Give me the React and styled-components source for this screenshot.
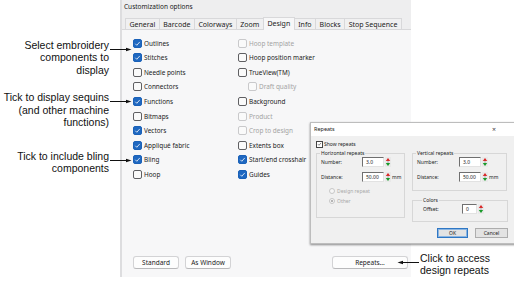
import styled, { createGlobalStyle } from "styled-components";

const GlobalStyle = createGlobalStyle`
  html, body {
    margin: 0;
    padding: 0;
    background: #fff;
  }
  body {
    width: 514px;
    height: 288px;
    overflow: hidden;
  }
`;

const leftItems = [
  { label: "Outlines", checked: true },
  { label: "Stitches", checked: true },
  { label: "Needle points" },
  { label: "Connectors" },
  { label: "Functions", checked: true },
  { label: "Bitmaps" },
  { label: "Vectors", checked: true },
  { label: "Appliqué fabric", checked: true },
  { label: "Bling", checked: true },
  { label: "Hoop" },
];

const rightItems = [
  { label: "Hoop template", disabled: true },
  { label: "Hoop position marker" },
  { label: "TrueView(TM)" },
  { label: "Draft quality", disabled: true, indent: true },
  { label: "Background" },
  { label: "Product", disabled: true },
  { label: "Crop to design", disabled: true },
  { label: "Extents box" },
  { label: "Start/end crosshair", checked: true },
  { label: "Guides", checked: true },
];

const tabs = ["General", "Barcode", "Colorways", "Zoom", "Design", "Info", "Blocks", "Stop Sequence"];

const Page = styled.div`
  position: relative;
  display: flex;
  width: 514px;
  height: 288px;
  font-family: "Noto Sans", sans-serif;
`;

const CalloutColumn = styled.div`
  position: relative;
  z-index: 2;
  flex: none;
  width: 120px;
  display: flex;
  flex-direction: column;
  align-items: flex-end;
  padding-top: 38.5px;
  box-sizing: border-box;
`;

const Callout = styled.div`
  display: flex;
  align-items: flex-start;
  margin-top: ${(p) => p.$gap || 0}px;
  margin-right: -12px;
`;

const CalloutText = styled.div`
  font-family: "Liberation Sans", Arial, sans-serif;
  font-size: 10.5px;
  line-height: 12.5px;
  color: #111;
  text-align: ${(p) => (p.$left ? "left" : "right")};
  white-space: nowrap;
`;

const LeaderSvg = styled.svg`
  flex: none;
  display: block;
`;

const RightCallout = styled.div`
  position: absolute;
  left: 397px;
  top: 251.5px;
  display: flex;
  align-items: flex-start;
`;

const Leader = ({ left }) => (
  <LeaderSvg width="23" height="13" viewBox="0 0 23 13">
    {left ? (
      <>
        <line x1="4" y1="10.5" x2="22" y2="10.5" stroke="#111" strokeWidth="1" />
        <polygon points="0.5,10.5 6,8.8 6,12.2" fill="#111" />
      </>
    ) : (
      <>
        <line x1="1" y1="10.5" x2="18" y2="10.5" stroke="#111" strokeWidth="1" />
        <polygon points="22.5,10.5 17,8.8 17,12.2" fill="#111" />
      </>
    )}
  </LeaderSvg>
);

const Dialog = styled.div`
  flex: none;
  width: 291px;
  height: 277px;
  display: flex;
  flex-direction: column;
  background: #eeeeef;
  border-left: 2px solid #dddddf;
  box-sizing: border-box;
`;

const DialogTitle = styled.div`
  height: 16px;
  padding-left: 2px;
  font-size: 6.5px;
  line-height: 14px;
  color: #1b1b1b;
`;

const TabStrip = styled.div`
  display: flex;
  align-items: flex-end;
  height: 13px;
  padding-left: 4px;
`;

const Tab = styled.div`
  position: relative;
  height: ${(p) => (p.$active ? 13 : 11)}px;
  margin-left: -1px;
  margin-bottom: ${(p) => (p.$active ? -1 : 0)}px;
  padding: 0 3.5px;
  border: 1px solid #d8d8da;
  border-bottom: none;
  background: ${(p) => (p.$active ? "#f7f7f8" : "#f0f0f1")};
  z-index: ${(p) => (p.$active ? 1 : 0)};
  font-size: 7px;
  line-height: ${(p) => (p.$active ? 12 : 11)}px;
  color: #1b1b1b;
  box-sizing: border-box;
  white-space: nowrap;
`;

const Panel = styled.div`
  flex: 1;
  display: flex;
  flex-direction: column;
  background: #f7f7f8;
  border-top: 1px solid #d8d8da;
  padding: 6px 3px 8px 11px;
`;

const OptionGrid = styled.div`
  display: grid;
  grid-template-columns: 105px 1fr;
  grid-auto-flow: column;
  grid-template-rows: repeat(10, 14.56px);
`;

const Option = styled.label`
  display: flex;
  align-items: center;
  gap: 2px;
  padding-left: ${(p) => (p.$indent ? 10 : 0)}px;
  font-size: 6.4px;
  color: ${(p) => (p.$disabled ? "#a3a3a3" : "#1b1b1b")};
  white-space: nowrap;
`;

const Box = styled.span`
  flex: none;
  width: 9px;
  height: 9px;
  box-sizing: border-box;
  border-radius: 2px;
  border: 1px solid ${(p) => (p.$checked ? "#1a61b8" : p.$disabled ? "#c9c9cb" : "#5f5f62")};
  background: ${(p) => (p.$checked ? "#1f68c1" : "#fafafa")};
  display: flex;
  align-items: center;
  justify-content: center;
`;

const Check = ({ color = "#fff", size = 7 }) => (
  <svg width={size} height={size} viewBox="0 0 8 8">
    <path d="M1.5 4.3 L3.2 6 L6.6 2.2" fill="none" stroke={color} strokeWidth="0.9" />
  </svg>
);

const ButtonRow = styled.div`
  margin-top: auto;
  display: flex;
  gap: 6px;
`;

const Button = styled.div`
  width: ${(p) => p.$w}px;
  height: 13px;
  margin-left: ${(p) => (p.$push ? "auto" : "0")};
  box-sizing: border-box;
  border: 1px solid #d3d3d5;
  border-bottom-color: #b9b9bb;
  border-radius: 3px;
  background: #fdfdfd;
  font-size: 6.5px;
  line-height: 11px;
  text-align: center;
  color: #1b1b1b;
`;

/* Repeats window floating over the main dialog */
const Repeats = styled.div`
  position: absolute;
  left: 310px;
  top: 122px;
  width: 206px;
  height: 122px;
  display: flex;
  flex-direction: column;
  border: 1px solid #bdbdbd;
  box-shadow: 0 1px 2px rgba(0, 0, 0, 0.45);
  box-sizing: border-box;
  font-family: "Noto Sans", sans-serif;
  font-size: 5px;
  color: #222;
  z-index: 3;
`;

const RepeatsTitle = styled.div`
  display: flex;
  justify-content: space-between;
  height: 13px;
  padding: 0 19px 0 3px;
  background: #fff;
  font-size: 5.5px;
  line-height: 13px;
`;

const Close = styled.span`
  font-size: 7px;
  color: #444;
`;

const RepeatsBody = styled.div`
  flex: 1;
  display: flex;
  flex-direction: column;
  background: #f0f0f0;
  padding: 4px 7px 5px 5px;
`;

const ShowRow = styled.div`
  display: flex;
  align-items: center;
  gap: 1px;
  height: 8px;
`;

const SmallBox = styled.span`
  width: 7px;
  height: 7px;
  box-sizing: border-box;
  border: 1px solid #444;
  background: #fff;
  display: flex;
  align-items: center;
  justify-content: center;
`;

const Groups = styled.div`
  display: flex;
  gap: 7px;
  margin-top: 2px;
`;

const Group = styled.fieldset`
  margin: 0;
  min-width: 0;
  width: ${(p) => p.$w}px;
  height: ${(p) => p.$h}px;
  padding: 1px 0 0 ${(p) => p.$pad || 4}px;
  border: 1px solid #d7d7d7;
  box-sizing: border-box;
  display: flex;
  flex-direction: column;
  gap: 5px;
`;

const Legend = styled.legend`
  padding: 0 1px;
  margin-left: -1px;
  font-size: 5px;
  line-height: 6px;
`;

const Column = styled.div`
  display: flex;
  flex-direction: column;
  gap: 6px;
`;

const Field = styled.div`
  display: grid;
  grid-template-columns: ${(p) => p.$label}px ${(p) => p.$input || 22}px 8px auto;
  align-items: center;
  height: 10px;
`;

const Input = styled.div`
  height: 10px;
  box-sizing: border-box;
  border: 1px solid;
  border-color: #6f6f6f #e2e2e2 #e2e2e2 #6f6f6f;
  background: #fff;
  padding-left: 3px;
  line-height: 8px;
`;

const SpinSvg = styled.svg`
  display: block;
  margin-left: 1px;
`;

const Spin = () => (
  <SpinSvg width="6" height="10" viewBox="0 0 6 10">
    <rect x="0" y="0" width="6" height="10" fill="#e9e9e9" />
    <polygon points="3,1 5.2,4 0.8,4" fill="#d22" />
    <line x1="3" y1="3.5" x2="3" y2="6.5" stroke="#888" strokeWidth="0.6" />
    <polygon points="0.8,6 5.2,6 3,9" fill="#1a9a2a" />
  </SpinSvg>
);

const Radio = styled.div`
  display: flex;
  align-items: center;
  gap: 2px;
  height: 6px;
  margin-top: ${(p) => p.$top || 0}px;
  padding-left: 8px;
  color: #a9a9a9;
`;

const Dot = styled.span`
  width: 6px;
  height: 6px;
  box-sizing: border-box;
  border: 1px solid #c7c7c7;
  border-radius: 50%;
  background: ${(p) => (p.$on ? "radial-gradient(circle, #b5b5b5 40%, #f6f6f6 45%)" : "#f6f6f6")};
`;

const DialogButtons = styled.div`
  margin-top: auto;
  display: flex;
  justify-content: flex-end;
  gap: 7px;
`;

const DialogButton = styled.div`
  width: ${(p) => p.$w}px;
  height: 10px;
  box-sizing: border-box;
  border: 1px solid ${(p) => (p.$default ? "#2f77c4" : "#adadad")};
  box-shadow: ${(p) => (p.$default ? "inset 0 0 0 1px #8ab5e2" : "none")};
  background: #e3e3e3;
  text-align: center;
  line-height: 8px;
`;

const FieldRow = ({ label, value, labelW, inputW, unit }) => (
  <Field $label={labelW} $input={inputW}>
    <span>{label}</span>
    <Input>{value}</Input>
    <Spin />
    <span>{unit}</span>
  </Field>
);

const OptionItem = ({ label, checked, disabled, indent }) => (
  <Option $disabled={disabled} $indent={indent}>
    <Box $checked={checked} $disabled={disabled}>
      {checked && <Check />}
    </Box>
    {label}
  </Option>
);

export default function App() {
  return (
    <Page>
      <GlobalStyle />
      <CalloutColumn>
        <Callout>
          <CalloutText>
            Select embroidery
            <br />
            components to
            <br />
            display
          </CalloutText>
          <Leader />
        </Callout>
        <Callout $gap={15}>
          <CalloutText>
            Tick to display sequins
            <br />
            (and other machine
            <br />
            functions)
          </CalloutText>
          <Leader />
        </Callout>
        <Callout $gap={21}>
          <CalloutText>
            Tick to include bling
            <br />
            components
          </CalloutText>
          <Leader />
        </Callout>
      </CalloutColumn>

      <Dialog>
        <DialogTitle>Customization options</DialogTitle>
        <TabStrip>
          {tabs.map((t) => (
            <Tab key={t} $active={t === "Design"}>
              {t}
            </Tab>
          ))}
        </TabStrip>
        <Panel>
          <OptionGrid>
            {leftItems.map((o) => (
              <OptionItem key={o.label} {...o} />
            ))}
            {rightItems.map((o) => (
              <OptionItem key={o.label} {...o} />
            ))}
          </OptionGrid>
          <ButtonRow>
            <Button $w={46}>Standard</Button>
            <Button $w={46}>As Window</Button>
            <Button $w={76} $push>
              Repeats...
            </Button>
          </ButtonRow>
        </Panel>
      </Dialog>

      <Repeats>
        <RepeatsTitle>
          <span>Repeats</span>
          <Close>×</Close>
        </RepeatsTitle>
        <RepeatsBody>
          <ShowRow>
            <SmallBox>
              <Check color="#222" size={6} />
            </SmallBox>
            Show repeats
          </ShowRow>
          <Groups>
            <Group $w={90} $h={68}>
              <Legend>Horizontal repeats</Legend>
              <FieldRow label="Number:" value="3.0" labelW={41} />
              <FieldRow label="Distance:" value="50.00" labelW={41} unit="mm" />
              <Radio $top={1}>
                <Dot />
                Design repeat
              </Radio>
              <Radio $top={-1}>
                <Dot $on />
                Other
              </Radio>
            </Group>
            <Column>
              <Group $w={95} $h={41}>
                <Legend>Vertical repeats</Legend>
                <FieldRow label="Number:" value="3.0" labelW={42} />
                <FieldRow label="Distance:" value="50.00" labelW={42} unit="mm" />
              </Group>
              <Group $w={96} $h={25} $pad={10}>
                <Legend>Colors</Legend>
                <FieldRow label="Offset:" value="0" labelW={39} inputW={15} />
              </Group>
            </Column>
          </Groups>
          <DialogButtons>
            <DialogButton $w={31} $default>
              OK
            </DialogButton>
            <DialogButton $w={33}>Cancel</DialogButton>
          </DialogButtons>
        </RepeatsBody>
      </Repeats>

      <RightCallout>
        <Leader left />
        <CalloutText $left>
          Click to access
          <br />
          design repeats
        </CalloutText>
      </RightCallout>
    </Page>
  );
}
